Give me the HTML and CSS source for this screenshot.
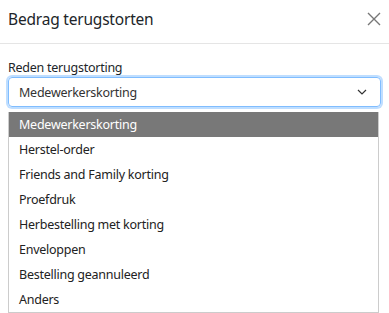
FILE: index.html
```html
<!DOCTYPE html>
<html>
<head>
<meta charset="utf-8">
<link rel="stylesheet" href="styles.css">
</head>
<body>
<div class="modal">
  <div class="header">
    <h5 class="title">Bedrag terugstorten</h5>
    <span class="close" aria-label="Sluiten">
      <svg width="14" height="14" viewBox="0 0 14 14"><path d="M1 1 L13 13 M13 1 L1 13" stroke="#777" stroke-width="1.4" fill="none"/></svg>
    </span>
  </div>
  <div class="body">
    <label class="label">Reden terugstorting</label>
    <div class="select">
      <span class="value">Medewerkerskorting</span>
      <svg class="chev" width="10" height="6" viewBox="0 0 10 6"><path d="M1 1 L5 5 L9 1" stroke="#333" stroke-width="1.2" fill="none"/></svg>
    </div>
    <ul class="list">
      <li class="opt active">Medewerkerskorting</li>
      <li class="opt">Herstel-order</li>
      <li class="opt">Friends and Family korting</li>
      <li class="opt">Proefdruk</li>
      <li class="opt">Herbestelling met korting</li>
      <li class="opt">Enveloppen</li>
      <li class="opt">Bestelling geannuleerd</li>
      <li class="opt">Anders</li>
    </ul>
  </div>
</div>
</body>
</html>
```
FILE: styles.css
```css
html, body {
  margin: 0;
  padding: 0;
  background: #fff;
}
body {
  font-family: "Noto Sans", "Open Sans", sans-serif;
  color: #212529;
  width: 389px;
  height: 313px;
  overflow: hidden;
}
.header {
  display: flex;
  align-items: center;
  justify-content: space-between;
  height: 43px;
  padding: 0 8px 0 8px;
  border-bottom: 1px solid #e5e5e5;
}
.title {
  margin: 0;
  font-size: 15.5px;
  letter-spacing: -0.2px;
  font-weight: 400;
  color: #212529;
  padding-bottom: 5px;
}
.close {
  display: flex;
  width: 14px;
  height: 14px;
  margin-bottom: 6px;
}
.body {
  padding: 14px 8px 0 8px;
  display: flex;
  flex-direction: column;
}
.label {
  font-size: 12.5px;
  letter-spacing: -0.25px;
  line-height: 19px;
  color: #212529;
}
.select {
  box-sizing: border-box;
  height: 30px;
  width: 373px;
  border: 1px solid #80bdff;
  border-radius: 4px;
  box-shadow: 0 0 0 2px rgba(0, 123, 255, 0.25);
  display: flex;
  align-items: center;
  justify-content: space-between;
  padding: 0 13px 0 10px;
  font-size: 12.5px;
  letter-spacing: -0.25px;
  color: #333;
}
.chev {
  display: block;
}
.list {
  list-style: none;
  margin: 5px 0 0 0;
  padding: 0;
  width: 371px;
  box-sizing: border-box;
  border: 1px solid #ccc;
  border-top: none;
}
.opt {
  height: 25px;
  line-height: 25px;
  padding-left: 10px;
  font-size: 12.5px;
  letter-spacing: -0.25px;
  color: #222;
}
.opt.active {
  background: #787878;
  color: #fff;
}
```
